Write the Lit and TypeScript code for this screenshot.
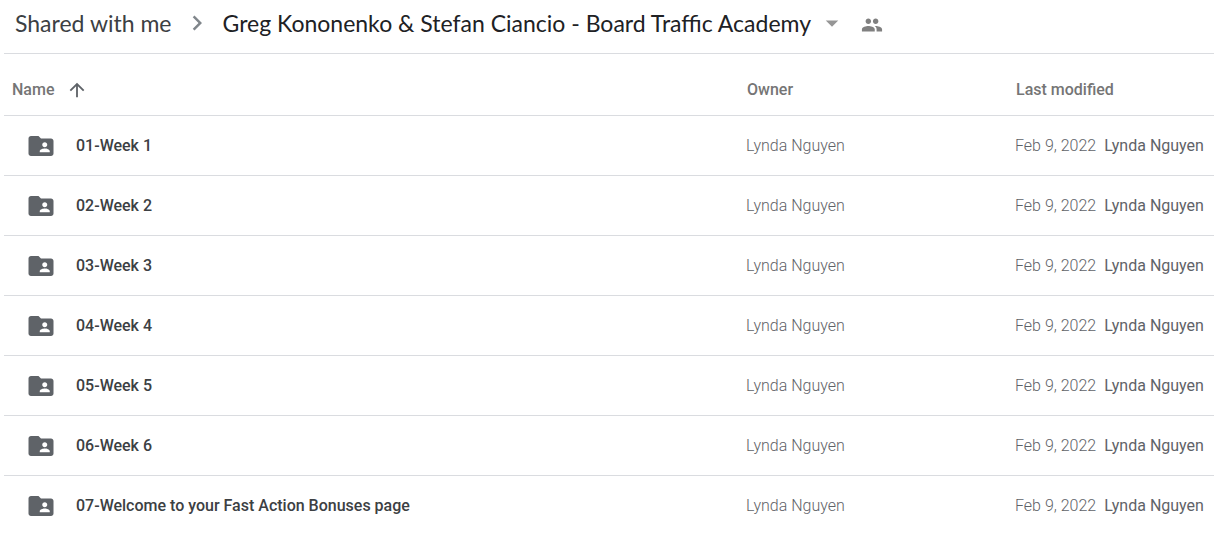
import { LitElement, html, css } from "lit";
import { customElement, state } from "lit/decorators.js";

interface Folder {
  name: string;
  owner: string;
  modified: string;
  modifiedBy: string;
}

const folder = (name: string): Folder => ({
  name,
  owner: "Lynda Nguyen",
  modified: "Feb 9, 2022",
  modifiedBy: "Lynda Nguyen",
});

@customElement("drive-breadcrumb")
class DriveBreadcrumb extends LitElement {
  static styles = css`
    .bar {
      display: flex;
      align-items: center;
      height: 54px;
      padding: 0 12px 8px 11px;
      box-sizing: border-box;
      border-bottom: 1px solid #dadce0;
      font-family: Lato, "Liberation Sans", sans-serif;
      font-size: 23px;
      line-height: 28px;
      white-space: nowrap;
    }
    .parent {
      color: #3c4043;
      text-decoration: none;
    }
    .chevron {
      width: 30px;
      height: 30px;
      margin: 0 11px 0 10px;
      fill: #80868b;
    }
    .title {
      display: flex;
      align-items: center;
      gap: 6px;
      padding: 0;
      border: 0;
      background: none;
      color: #202124;
      font: inherit;
    }
    .caret {
      width: 30px;
      height: 30px;
      fill: #969696;
    }
    .people {
      display: flex;
      margin-left: 14px;
      padding: 4px 0 0;
      border: 0;
      background: none;
    }
    .people-icon {
      width: 22px;
      height: 24px;
      fill: #808080;
    }
  `;

  render() {
    return html`
      <nav class="bar" aria-label="Location">
        <a class="parent" href="#shared">Shared with me</a>
        <svg class="chevron" viewBox="0 0 24 24" aria-hidden="true">
          <path d="M8.6 16.6 13.2 12 8.6 7.4 10 6l6 6-6 6z" />
        </svg>
        <button class="title" type="button">
          Greg Kononenko &amp; Stefan Ciancio - Board Traffic Academy
          <svg class="caret" viewBox="0 0 24 24" aria-hidden="true">
            <path d="M7 10l5 5 5-5z" />
          </svg>
        </button>
        <button class="people" type="button" aria-label="Manage people">
          <svg class="people-icon" viewBox="0 0 24 24" aria-hidden="true">
            <path
              d="M16 11c1.66 0 2.99-1.34 2.99-3S17.66 5 16 5s-3 1.34-3 3 1.34 3 3 3zm-8 0c1.66 0 2.99-1.34 2.99-3S9.66 5 8 5 5 6.34 5 8s1.34 3 3 3zm0 2c-2.33 0-7 1.17-7 3.5V19h14v-2.5c0-2.33-4.67-3.5-7-3.5zm8 0c-.29 0-.62.02-.97.05 1.16.84 1.97 1.97 1.97 3.45V19h6v-2.5c0-2.33-4.67-3.5-7-3.5z"
            />
          </svg>
        </button>
      </nav>
    `;
  }
}

@customElement("app-root")
class AppRoot extends LitElement {
  static styles = css`
    :host {
      display: block;
      padding-left: 4px;
      background: #fff;
      font-family: Roboto, "Liberation Sans", sans-serif;
      font-size: 16px;
      line-height: 20px;
    }
    .files {
      width: 100%;
      table-layout: fixed;
      border-collapse: separate;
      border-spacing: 0;
    }
    .owner-col {
      width: 269px;
    }
    .modified-col {
      width: 200px;
    }
    th,
    td {
      box-sizing: border-box;
      height: 60px;
      padding: 0 0 0 1px;
      text-align: left;
      white-space: nowrap;
      font-weight: 400;
      color: #757575;
    }
    th {
      height: 62px;
      padding: 10px 0 0 2px;
      font-weight: 500;
    }
    .name-head {
      padding-left: 8px;
    }
    th,
    tr:not(:last-child) td {
      border-bottom: 1px solid #dadce0;
    }
    .sort {
      display: flex;
      align-items: center;
      gap: 12px;
      height: 20px;
      padding: 0;
      border: 0;
      background: none;
      color: inherit;
      font: inherit;
    }
    .arrow {
      width: 22px;
      height: 22px;
      fill: #5f6368;
    }
    .entry {
      display: flex;
      align-items: center;
      gap: 20px;
      padding-left: 21px;
      color: #3c4043;
      font-weight: 500;
    }
    .folder {
      width: 30px;
      height: 30px;
      fill: #5f6368;
    }
    .light {
      color: #5f6368;
      font-weight: 300;
    }
    .by {
      margin-left: 4px;
      color: #5f6368;
    }
  `;

  @state() private folders: Folder[] = [
    "01-Week 1",
    "02-Week 2",
    "03-Week 3",
    "04-Week 4",
    "05-Week 5",
    "06-Week 6",
    "07-Welcome to your Fast Action Bonuses page",
  ].map(folder);

  private row(f: Folder) {
    return html`
      <tr>
        <td>
          <div class="entry">
            <svg class="folder" viewBox="0 0 24 24" aria-hidden="true">
              <path
                d="M20 6h-8l-2-2H4c-1.1 0-1.99.9-1.99 2L2 18c0 1.1.9 2 2 2h16c1.1 0 2-.9 2-2V8c0-1.1-.9-2-2-2zm-5 3c1.1 0 2 .9 2 2s-.9 2-2 2-2-.9-2-2 .9-2 2-2zm4 8h-8v-1c0-1.33 2.67-2 4-2s4 .67 4 2v1z"
              />
            </svg>
            <span>${f.name}</span>
          </div>
        </td>
        <td class="light">${f.owner}</td>
        <td><span class="light">${f.modified}</span> <span class="by">${f.modifiedBy}</span></td>
      </tr>
    `;
  }

  render() {
    return html`
      <drive-breadcrumb></drive-breadcrumb>
      <table class="files">
        <colgroup>
          <col />
          <col class="owner-col" />
          <col class="modified-col" />
        </colgroup>
        <thead>
          <tr>
            <th class="name-head" scope="col" aria-sort="ascending">
              <button class="sort" type="button">
                Name
                <svg class="arrow" viewBox="0 0 24 24" aria-hidden="true">
                  <path d="M4 12l1.41 1.41L11 7.83V20h2V7.83l5.58 5.59L20 12l-8-8-8 8z" />
                </svg>
              </button>
            </th>
            <th scope="col">Owner</th>
            <th scope="col">Last modified</th>
          </tr>
        </thead>
        <tbody>
          ${this.folders.map((f) => this.row(f))}
        </tbody>
      </table>
    `;
  }
}
